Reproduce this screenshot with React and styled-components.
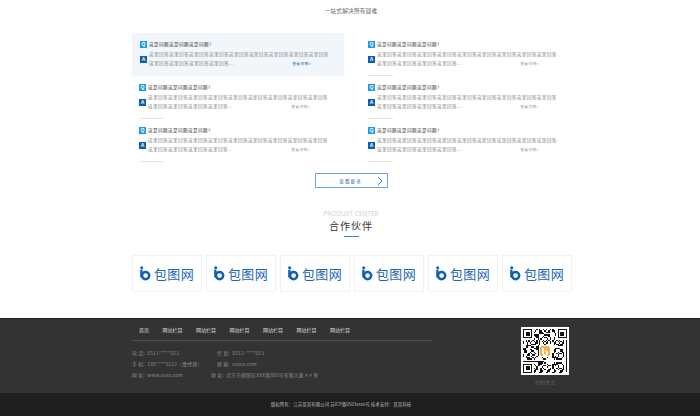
import styled, { createGlobalStyle } from 'styled-components';

const GlobalStyle = createGlobalStyle`
	html, body {
		margin: 0;
		padding: 0;
		background: #fff;
	}
	body {
		font-family: 'Noto Sans CJK SC', 'Noto Sans', sans-serif;
		width: 700px;
		height: 416px;
		overflow: hidden;
	}
`;

const questions = [0, 1, 2, 3, 4, 5];
const answerLine = '这里回答这里回答这里回答这里回答这里回答这里回答这里回答这里回答这里回答';
const answerEnd = '这里回答这里回答这里回答这里回答...';
const navItems = ['首页', '网站栏目', '网站栏目', '网站栏目', '网站栏目', '网站栏目', '网站栏目'];

// Fixed module pattern for the QR code
const qrSize = 33;
const isFinder = (x, y) =>
	(x < 8 && y < 8) || (x >= qrSize - 8 && y < 8) || (x < 8 && y >= qrSize - 8);
const qrCells = [];
for (let y = 0; y < qrSize; y++) {
	for (let x = 0; x < qrSize; x++) {
		if (!isFinder(x, y) && (x * 7 + y * 13 + x * y * 3 + ((x ^ y) % 5)) % 5 < 2) {
			qrCells.push([x, y]);
		}
	}
}

const Finder = ({ x, y }) => (
	<g>
		<rect x={x} y={y} width="7" height="7" fill="#111" />
		<rect x={x + 1} y={y + 1} width="5" height="5" fill="#fff" />
		<rect x={x + 2} y={y + 2} width="3" height="3" fill="#111" />
	</g>
);

const QrCode = () => (
	<QrBox>
		<svg width="44" height="44" viewBox="0 0 33 33" shapeRendering="crispEdges">
			{qrCells.map(([x, y]) => (
				<rect key={`${x}-${y}`} x={x} y={y} width="1" height="1" fill="#111" />
			))}
			<Finder x={0} y={0} />
			<Finder x={26} y={0} />
			<Finder x={0} y={26} />
			<rect x="12" y="12" width="9" height="9" rx="1" fill="#fff" />
			<rect x="13" y="13" width="7" height="7" rx="1" fill="#f6b23c" />
			<path d="M15 14.5v3.6a1.6 1.6 0 1 0 1.6-1.6" fill="none" stroke="#fff" strokeWidth="1" />
		</svg>
	</QrBox>
);

const LogoMark = () => (
	<svg width="11" height="15" viewBox="0 0 11 15">
		<circle cx="1.7" cy="1.7" r="1.5" fill="#0f5fb4" />
		<path d="M1.4 4.6v6" fill="none" stroke="#0f5fb4" strokeWidth="2.4" strokeLinecap="round" />
		<circle cx="5.6" cy="9.6" r="3.6" fill="none" stroke="#0f5fb4" strokeWidth="2.5" />
	</svg>
);

const Chevron = () => (
	<svg width="6" height="10" viewBox="0 0 6 10">
		<path d="M1 1l4 4-4 4" fill="none" stroke="#3f86c8" strokeWidth="1" />
	</svg>
);

const App = () => {
	return (
		<Page>
			<GlobalStyle />
			<Main>
				<Slogan>一站式解决所有疑难</Slogan>
				<FaqGrid>
					{questions.map((id) => (
						<FaqItem key={id} $active={id === 0}>
							<QuestionRow>
								<Badge $kind="q">Q</Badge>
								<QuestionText>这是问题这是问题这是问题?</QuestionText>
							</QuestionRow>
							<AnswerRow>
								<Badge $kind="a">A</Badge>
								<AnswerBody>
									<AnswerLine>{answerLine}</AnswerLine>
									<AnswerLast>
										<AnswerLine>{answerEnd}</AnswerLine>
										<DetailLink $active={id === 0}>查看详情&gt;</DetailLink>
									</AnswerLast>
								</AnswerBody>
							</AnswerRow>
						</FaqItem>
					))}
				</FaqGrid>
				<MoreButton>
					<MoreLabel>查看更多</MoreLabel>
					<Chevron />
				</MoreButton>
				<SectionEn>PRODUXT CENTER</SectionEn>
				<SectionTitle>合作伙伴</SectionTitle>
				<SectionBar />
				<PartnerRow>
					{questions.map((id) => (
						<PartnerCard key={id}>
							<LogoMark />
							<LogoText>包图网</LogoText>
						</PartnerCard>
					))}
				</PartnerRow>
			</Main>
			<Footer>
				<FooterMain>
					<FooterLeft>
						<FooterNav>
							{navItems.map((item, i) => (
								<NavItem key={i}>{item}</NavItem>
							))}
						</FooterNav>
						<ContactRow>
							<ContactA>电 话:&nbsp;&nbsp;0512-****023</ContactA>
							<ContactB>传 真:&nbsp;&nbsp;0512-****023</ContactB>
						</ContactRow>
						<ContactRow>
							<ContactA>手 机:&nbsp;&nbsp;189****9222（曹经理）</ContactA>
							<ContactB>邮 箱:&nbsp;&nbsp;xxxxx.com</ContactB>
						</ContactRow>
						<ContactRow>
							<ContactA>网 址:&nbsp;&nbsp;www.xxxx.com</ContactA>
							<ContactC>地 址:&nbsp;&nbsp;北京市朝阳区XXX路888号有限大厦 # # 室</ContactC>
						</ContactRow>
					</FooterLeft>
					<QrColumn>
						<QrCode />
						<QrCaption>扫码关注</QrCaption>
					</QrColumn>
				</FooterMain>
				<Copyright>版权所有：江苏某某有限公司 苏ICP备0503xxxx号 技术支持：某某科技</Copyright>
			</Footer>
		</Page>
	);
};

const Page = styled.div`
	width: 700px;
	height: 416px;
	display: flex;
	flex-direction: column;
	overflow: hidden;
`;

const Main = styled.div`
	height: 318px;
	padding-left: 2px;
	display: flex;
	flex-direction: column;
	align-items: center;
`;

const Slogan = styled.div`
	margin-top: 6px;
	height: 10px;
	font-size: 5.6px;
	line-height: 10px;
	letter-spacing: 0.3px;
	color: #666;
`;

const FaqGrid = styled.div`
	margin: 17px 0 0 2px;
	width: 440px;
	display: grid;
	grid-template-columns: 212px 211px;
	column-gap: 17px;
	grid-auto-flow: column;
	grid-template-rows: repeat(3, 43px);
`;

const FaqItem = styled.div`
	position: relative;
	padding: 7px 0 0 ${(props) => (props.$active ? '8px' : '7px')};
	background: ${(props) => (props.$active ? '#f1f6fb' : 'transparent')};
	&::after {
		content: '';
		display: ${(props) => (props.$active ? 'none' : 'block')};
		position: absolute;
		left: 7px;
		bottom: 0;
		width: 25px;
		height: 1px;
		background: #e4e4e4;
	}
`;

const QuestionRow = styled.div`
	display: flex;
	align-items: center;
	gap: 2px;
	height: 8px;
`;

const Badge = styled.span`
	flex: none;
	width: 7px;
	height: 7px;
	display: flex;
	align-items: center;
	justify-content: center;
	font-family: 'Liberation Sans', sans-serif;
	font-size: 5px;
	font-weight: bold;
	line-height: 7px;
	color: #fff;
	background: ${(props) => (props.$kind === 'q' ? '#1d9be9' : '#0c5cb2')};
`;

const QuestionText = styled.span`
	font-size: 4.6px;
	line-height: 8px;
	letter-spacing: 0.4px;
	color: #333;
`;

const AnswerRow = styled.div`
	margin-top: 2px;
	display: flex;
	align-items: center;
	gap: 2px;
`;

const AnswerBody = styled.div`
	display: flex;
	flex-direction: column;
`;

const AnswerLine = styled.span`
	font-size: 4.6px;
	line-height: 9px;
	letter-spacing: 0.4px;
	color: #808080;
	white-space: nowrap;
`;

const AnswerLast = styled.div`
	display: flex;
	justify-content: space-between;
	width: 162px;
`;

const DetailLink = styled.span`
	font-size: 3.8px;
	line-height: 9px;
	letter-spacing: 0.3px;
	color: ${(props) => (props.$active ? '#1a65b5' : '#999')};
`;

const MoreButton = styled.div`
	margin-top: 11px;
	width: 73px;
	height: 15px;
	box-sizing: border-box;
	border: 1px solid #6aa5dd;
	display: flex;
	align-items: center;
	justify-content: flex-end;
	gap: 15px;
	padding-right: 4px;
`;

const MoreLabel = styled.span`
	font-size: 5px;
	letter-spacing: 0.6px;
	color: #2f72b6;
`;

const SectionEn = styled.div`
	margin-top: 22px;
	height: 8px;
	font-family: 'Open Sans', sans-serif;
	font-size: 6.5px;
	line-height: 8px;
	color: #d0d0d0;
`;

const SectionTitle = styled.div`
	margin-top: 1px;
	height: 14px;
	font-size: 10px;
	line-height: 14px;
	letter-spacing: 1px;
	color: #333;
`;

const SectionBar = styled.div`
	margin-top: 3px;
	width: 15px;
	height: 1px;
	background: #3a7fc2;
`;

const PartnerRow = styled.div`
	margin: 18px 0 0 2px;
	width: 440px;
	display: flex;
	gap: 4px;
`;

const PartnerCard = styled.div`
	width: 70px;
	height: 37px;
	box-sizing: border-box;
	border: 1px solid #f3f3f3;
	display: flex;
	align-items: center;
	justify-content: center;
	gap: 3px;
`;

const LogoText = styled.span`
	font-size: 13px;
	line-height: 15px;
	letter-spacing: 0.3px;
	color: #1a66b5;
`;

const Footer = styled.div`
	flex: 1;
	display: flex;
	flex-direction: column;
	background: #333;
	border-top: 1px solid #222;
`;

const FooterMain = styled.div`
	height: 74px;
	width: 440px;
	margin-left: 132px;
	display: flex;
	justify-content: space-between;
`;

const FooterLeft = styled.div`
	width: 300px;
`;

const FooterNav = styled.div`
	height: 22px;
	padding-left: 7px;
	box-sizing: border-box;
	border-bottom: 1px solid #4c4c4c;
	display: flex;
	align-items: center;
	gap: 13.5px;
	margin-bottom: 6px;
`;

const NavItem = styled.span`
	font-size: 5px;
	line-height: 20px;
	color: #ddd;
`;

const ContactRow = styled.div`
	display: flex;
	height: 11px;
	align-items: center;
	font-size: 4.8px;
	letter-spacing: 0.2px;
	color: #8c8c8c;
`;

const ContactA = styled.span`
	width: 85px;
	white-space: nowrap;
`;

const ContactB = styled.span`
	white-space: nowrap;
`;

const ContactC = styled.span`
	margin-left: -6px;
	white-space: nowrap;
`;

const QrColumn = styled.div`
	width: 48px;
	margin-right: 3px;
	padding-top: 8px;
	display: flex;
	flex-direction: column;
	align-items: center;
`;

const QrBox = styled.div`
	width: 48px;
	height: 48px;
	background: #fff;
	display: flex;
	align-items: center;
	justify-content: center;
`;

const QrCaption = styled.div`
	margin-top: 3px;
	font-size: 5px;
	line-height: 8px;
	color: #666;
`;

const Copyright = styled.div`
	flex: 1;
	padding-right: 18px;
	background: #1f1f1f;
	text-align: center;
	font-size: 4.5px;
	line-height: 23px;
	color: #bbb;
`;

export default App;
